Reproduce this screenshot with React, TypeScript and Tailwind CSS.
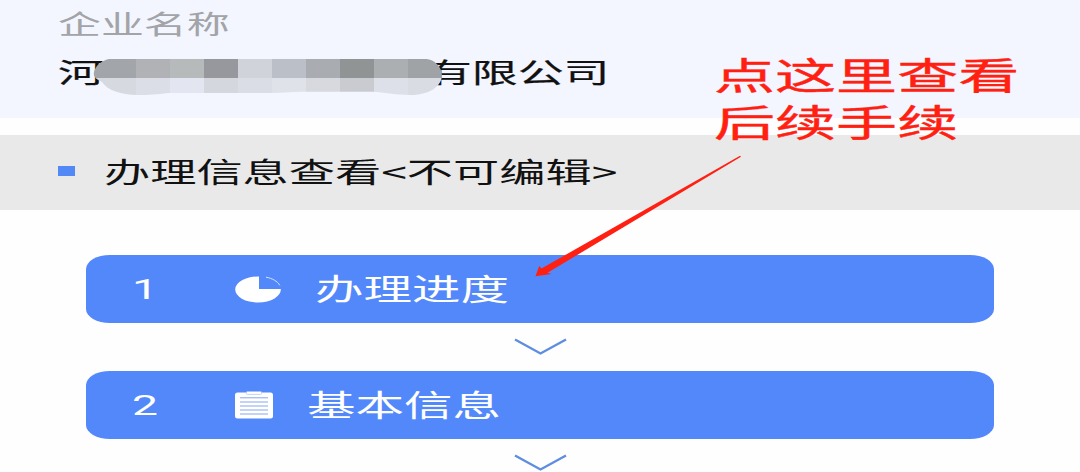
import type { ReactNode } from "react";
import clsx from "clsx";

const MASK = [
  { x: 92, w: 44, top: "#a2a5a9", bottom: "#d6d9df" },
  { x: 136, w: 34, top: "#b0b2b6", bottom: "#dbdee7" },
  { x: 170, w: 34, top: "#b6babb", bottom: "#e3e6f0" },
  { x: 204, w: 34, top: "#96989d", bottom: "#d4d7de" },
  { x: 238, w: 34, top: "#d0d3da", bottom: "#dadde6" },
  { x: 272, w: 34, top: "#bbbfc8", bottom: "#dfe2e8" },
  { x: 306, w: 34, top: "#a9acb0", bottom: "#d7d9de" },
  { x: 340, w: 34, top: "#909495", bottom: "#c9cbd0" },
  { x: 374, w: 34, top: "#abafb2", bottom: "#dde0e8" },
  { x: 408, w: 36, top: "#a0a3a6", bottom: "#d9dce3" },
];

const STEPS = [
  { no: "1", label: "办理进度", icon: <PieIcon />, gap: "w-[80px]" },
  { no: "2", label: "基本信息", icon: <ClipboardIcon />, gap: "w-[72px]" },
];

function Wide({ className, children }: { className?: string; children: ReactNode }) {
  return (
    <span className={clsx("block origin-left scale-x-[1.65] whitespace-nowrap", className)}>
      {children}
    </span>
  );
}

function PieIcon() {
  return (
    <svg width="46" height="28" viewBox="0 0 46 28" className="block">
      <path d="M24 1.5A22.8 13 0 1 0 45.8 14H24Z" fill="#fff" />
      <path d="M31 2.2C37 3.2 42.5 6.2 44.8 10.3" fill="none" stroke="#d5e2ff" strokeWidth="1" />
    </svg>
  );
}

function ClipboardIcon() {
  return (
    <svg width="46" height="28" viewBox="0 0 46 28" className="block">
      <rect x="0" y="1.5" width="38" height="26" rx="2.5" fill="#fff" />
      <rect x="11.5" y="0.4" width="15" height="3" rx="1" fill="#fff" stroke="#a9c1f5" strokeWidth="0.7" />
      <path d="M5 6.8H33M5 11H33M5 15H33M5 19H33M5 23H33" stroke="#87a5ee" strokeWidth="1" />
    </svg>
  );
}

function Chevron() {
  return (
    <svg width="54" height="18" viewBox="0 0 54 18" className="block">
      <path d="M2 1.5L27.5 15.5L53 1.5" fill="none" stroke="#5f8de0" strokeWidth="2.4" />
    </svg>
  );
}

function NameMask() {
  return (
    <svg width="352" height="36" viewBox="92 59 352 36" className="absolute left-[92px] top-[59px]">
      <clipPath id="smear">
        <path d="M109 59H427C435 60 442 67 442 76C441 87 429 95 410 95C394 95 388 93 374 91.8H300L274 93H168C157 94.5 148 95 138 95C121 95 107 90 102 82C96 79 93 77 94 72C96 65 101 61 109 59Z" />
      </clipPath>
      <g clipPath="url(#smear)" shapeRendering="crispEdges">
        {MASK.map((m) => (
          <g key={m.x}>
            <rect x={m.x} y="59" width={m.w} height="19" fill={m.top} />
            <rect x={m.x} y="78" width={m.w} height="17" fill={m.bottom} />
          </g>
        ))}
      </g>
    </svg>
  );
}

function Annotation() {
  return (
    <>
      <div className="absolute left-[714px] top-[51px] text-[37px] leading-[46.5px] text-[#ff2012] [-webkit-text-stroke:0.4px_#ff2012]">
        <Wide>点这里查看</Wide>
        <Wide>后续手续</Wide>
      </div>
      <svg width="1080" height="472" viewBox="0 0 1080 472" className="absolute left-0 top-0">
        <path d="M740 155.8L541.5 268.5L539.2 266L535.5 276.2L551.5 274L547.5 272.8L741 156.8Z" fill="#ff2012" />
      </svg>
    </>
  );
}

export default function App() {
  return (
    <main className="relative h-[472px] w-[1080px] overflow-hidden bg-[#fefefe] font-['Noto_Sans_CJK_SC',sans-serif]">
      <section className="h-[118px] bg-[#f3f6ff] pl-[58px] pt-[4px]">
        <Wide className="text-[26px] leading-[38px] text-[#a2a4a8]">企业名称</Wide>
        <div className="mt-[9px] flex text-[27.8px] leading-[40px] text-[#111] [-webkit-text-stroke:0.2px_#111]">
          <div className="w-[368px]">
            <Wide>河</Wide>
          </div>
          <Wide>有限公司</Wide>
        </div>
        <NameMask />
      </section>

      <section className="mt-[17px] flex h-[75px] items-center bg-[#e9e9e9] pb-[4px] pl-[58px]">
        <span className="h-[10px] w-[17px] bg-[#5388f7]" />
        <Wide className="ml-[29px] pt-px text-[28px] text-[#111]">办理信息查看&lt;不可编辑&gt;</Wide>
      </section>

      <section className="mt-[44.5px] flex flex-col items-center">
        {STEPS.map((s) => (
          <div key={s.no} className="flex w-full flex-col items-center">
            <div className="flex h-[68px] w-[908px] items-center rounded-[24px/14px] bg-[#5388fb] pl-[46px] text-white">
              <Wide className="w-[103px] pt-[3px] font-['Roboto',sans-serif] text-[28px]">{s.no}</Wide>
              <div className={clsx("shrink-0", s.gap)}>{s.icon}</div>
              <Wide className="pb-[2px] text-[29.4px]">{s.label}</Wide>
            </div>
            <div className="flex h-[48px] items-center pt-px">
              <Chevron />
            </div>
          </div>
        ))}
      </section>

      <Annotation />
    </main>
  );
}
